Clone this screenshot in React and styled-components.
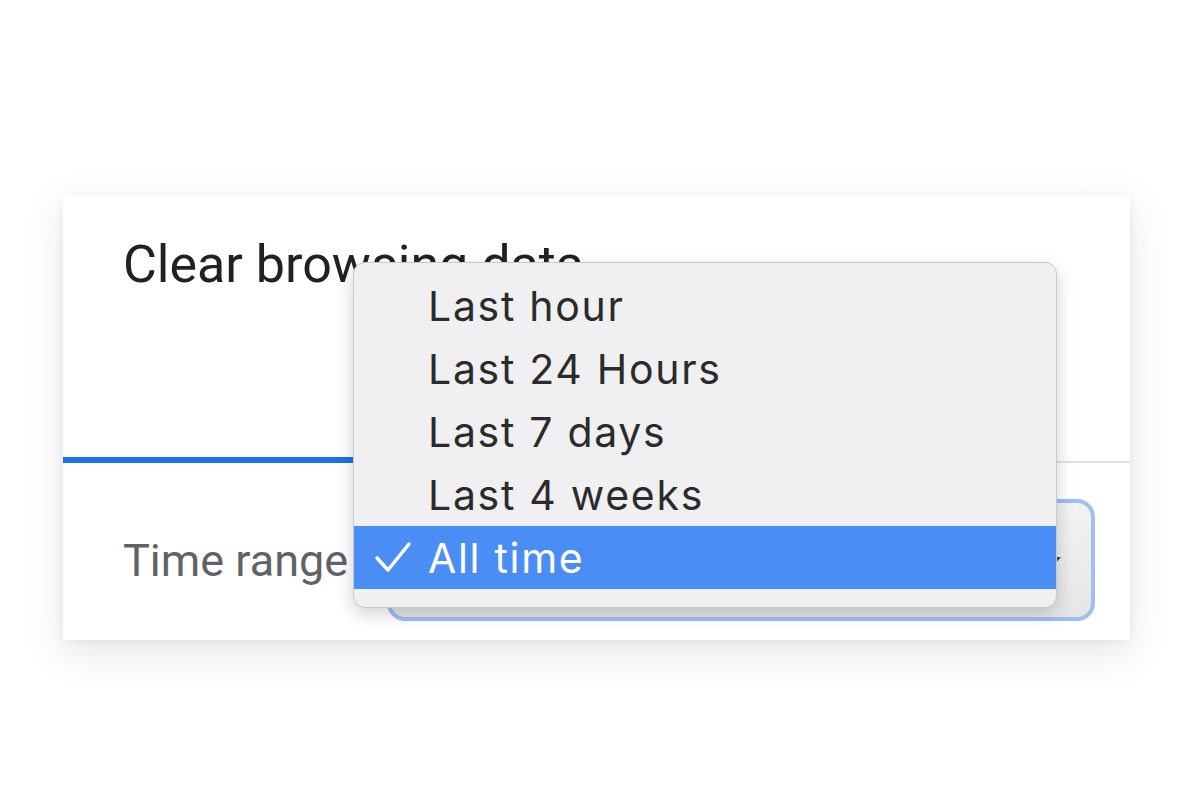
import React from 'react';
import styled, { createGlobalStyle } from 'styled-components';

const GlobalStyle = createGlobalStyle`
    html, body {
        margin: 0;
        padding: 0;
        background: #ffffff;
    }
`

const Page = styled.div`
    width: 1200px;
    height: 800px;
    box-sizing: border-box;
    padding: 195px 70px 0 63px;
    background: #ffffff;
    font-family: Roboto, 'Liberation Sans', sans-serif;
`

const Card = styled.section`
    position: relative;
    width: 1067px;
    height: 445px;
    background: #ffffff;
    box-shadow: 0 12px 40px rgba(0, 0, 0, 0.10), 0 2px 10px rgba(0, 0, 0, 0.05);
    display: flex;
    flex-direction: column;
`

const Header = styled.h1`
    margin: 0;
    padding: 40px 60px 0;
    height: 130px;
    box-sizing: border-box;
    font-size: 52px;
    line-height: 60px;
    font-weight: 400;
    color: #202124;
`

const Tabs = styled.div`
    display: flex;
    height: 138px;
    border-bottom: 2px solid #e3e3e3;
    box-sizing: border-box;
`

const Tab = styled.div`
    flex: 1;
    border-bottom: 6px solid ${props => (props.active ? '#1a73e8' : 'transparent')};
    margin-bottom: -2px;
`

const Row = styled.div`
    display: flex;
    align-items: center;
    padding: 36px 35px 0 60px;
`

const Label = styled.span`
    font-size: 45px;
    color: #5f6368;
`

const Select = styled.div`
    margin-left: auto;
    width: 708px;
    height: 122px;
    box-sizing: border-box;
    border: 4px solid #9dbff3;
    border-radius: 18px;
    background: linear-gradient(#f2f2f2, #e6e6e6);
    display: flex;
    align-items: center;
    justify-content: flex-end;
    padding-right: 30px;
`

const Caret = styled.span`
    width: 0;
    height: 0;
    border-left: 5px solid transparent;
    border-right: 5px solid transparent;
    border-top: 6px solid #444;
`

const Menu = styled.ul`
    position: absolute;
    left: 290px;
    top: 67px;
    width: 704px;
    margin: 0;
    padding: 11px 0 18px;
    list-style: none;
    box-sizing: border-box;
    background: #f0f0f2;
    border: 1px solid #c9c9cc;
    border-radius: 12px;
    box-shadow: 0 6px 18px rgba(0, 0, 0, 0.18);
    font-family: Inter, 'Liberation Sans', sans-serif;
`

const Item = styled.li`
    height: 63px;
    display: flex;
    align-items: center;
    padding-left: 74px;
    position: relative;
    font-size: 41px;
    letter-spacing: 1.7px;
    color: ${props => (props.selected ? '#ffffff' : '#2b2b2b')};
    background: ${props => (props.selected ? '#4a8ef5' : 'transparent')};

    svg {
        position: absolute;
        left: 20px;
        top: 15px;
    }
`

const options = ['Last hour', 'Last 24 Hours', 'Last 7 days', 'Last 4 weeks', 'All time'];

const App = () => {
    return(
        <Page>
            <GlobalStyle />
            <Card>
                <Header>Clear browsing data</Header>
                <Tabs>
                    <Tab active />
                    <Tab />
                </Tabs>
                <Row>
                    <Label>Time range</Label>
                    <Select>
                        <Caret />
                    </Select>
                </Row>
                <Menu>
                    {options.map(o => (
                        <Item key={o} selected={o === 'All time'}>
                            {o === 'All time' && (
                                <svg width="38" height="34" viewBox="0 0 38 34">
                                    <polyline points="3,17 14,29 35,3" fill="none" stroke="#ffffff" strokeWidth="3.5" strokeLinecap="round" strokeLinejoin="round" />
                                </svg>
                            )}
                            {o}
                        </Item>
                    ))}
                </Menu>
            </Card>
        </Page>
    );
}

export default App;
